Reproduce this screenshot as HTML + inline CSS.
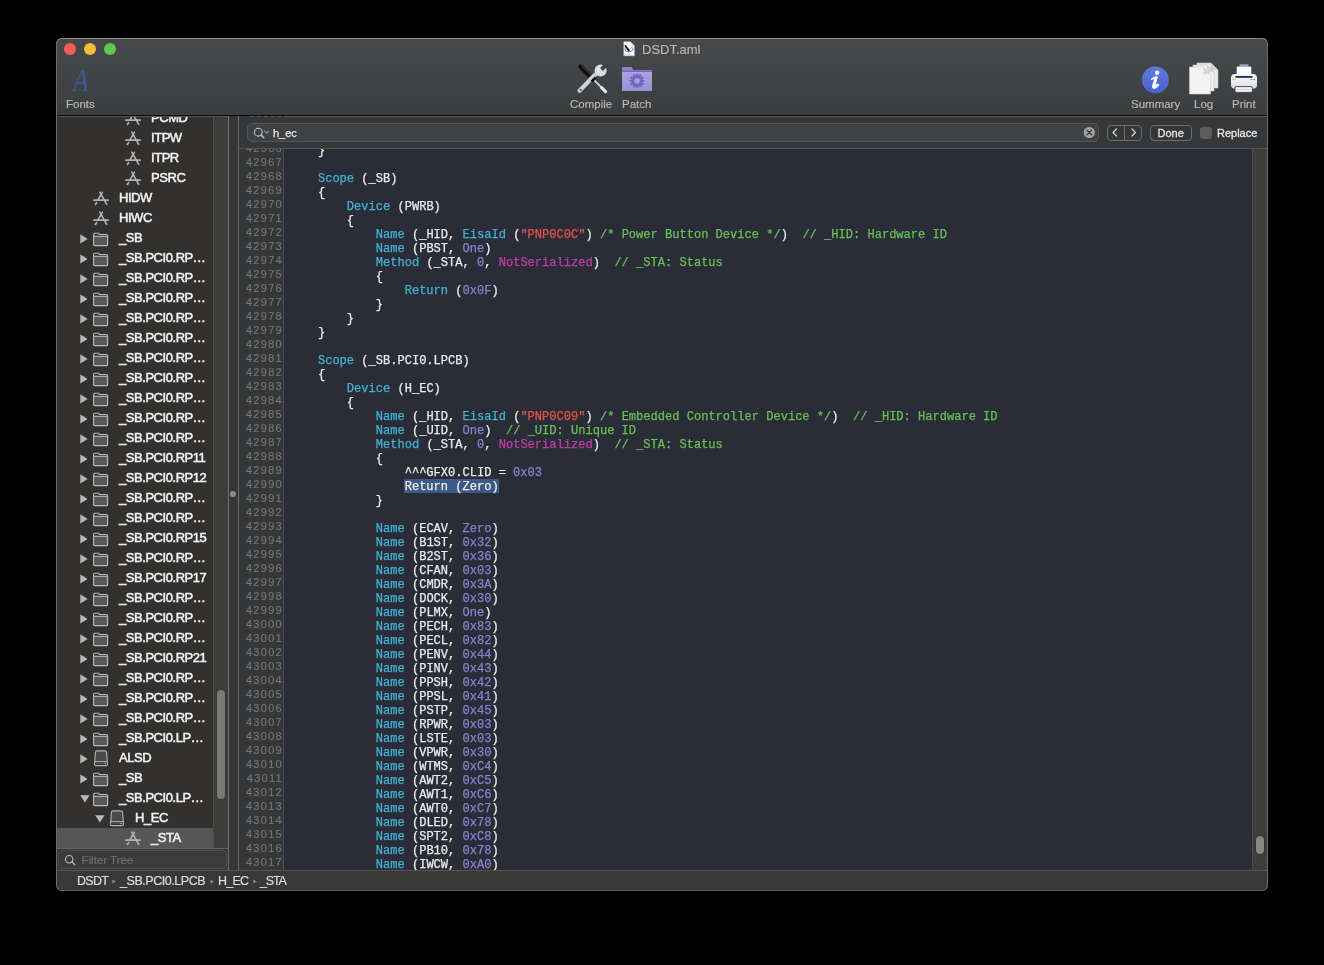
<!DOCTYPE html><html><head><meta charset="utf-8"><style>
*{margin:0;padding:0;box-sizing:border-box}
html,body{width:1324px;height:965px;background:#000;overflow:hidden;font-family:"Liberation Sans",sans-serif;position:relative}
div,span,svg{position:absolute}
i{font-style:normal}
#win{left:56px;top:38px;width:1212px;height:853px;border-radius:6px;background:#373737;overflow:hidden}
#winb{left:56px;top:38px;width:1212px;height:853px;border-radius:6px;border:1px solid #6c6c6c;border-top-color:#8c8c8c;border-bottom-color:#5e5e5e;z-index:50;pointer-events:none}
.tbtxt{font-size:11.5px;color:#b9b9b9;line-height:13px;white-space:nowrap;-webkit-text-stroke:0.15px}
.row{height:20px;font-size:13px;color:#f2f2f2;line-height:20px;white-space:nowrap;letter-spacing:-0.45px;-webkit-text-stroke:0.5px}
.ln{width:41px;text-align:right;font-size:11px;letter-spacing:1.3px;color:#757575;-webkit-text-stroke:0.15px;height:14px;line-height:14px}
.cl{left:289px;height:14px;line-height:14px;font-family:"Liberation Mono",monospace;font-size:12.055px;color:#ececec;white-space:pre;-webkit-text-stroke:0.25px}
.kw{color:#42b2d2}.st{color:#e1554b}.cm{color:#68c055}.nm{color:#8b80cf}.ns{color:#c03fa1}
.hi{background:#3a5683}
.vl{width:1px}
.hl{height:1px}
</style></head><body><div id="root" style="left:0;top:0;width:1324px;height:965px;will-change:transform">
<div id="win"></div>

<div style="left:56px;top:38px;width:1212px;height:77px;background:linear-gradient(#48494a,#3c3d3e);border-radius:6px 6px 0 0"></div>
<div class="hl" style="left:56px;top:115px;width:1212px;background:#0a0a0a"></div>
<div style="left:64px;top:43px;width:12px;height:12px;border-radius:50%;background:#ee5f57"></div>
<div style="left:84px;top:43px;width:12px;height:12px;border-radius:50%;background:#f5bd3f"></div>
<div style="left:104px;top:43px;width:12px;height:12px;border-radius:50%;background:#5ec84f"></div>
<div class="tbtxt" style="left:642px;top:42px;font-size:13px;line-height:15px;color:#b6b6b6">DSDT.aml</div>
<div class="tbtxt" style="left:66px;top:98px">Fonts</div>
<div class="tbtxt" style="left:570px;top:98px">Compile</div>
<div class="tbtxt" style="left:622px;top:98px">Patch</div>
<div class="tbtxt" style="left:1131px;top:98px">Summary</div>
<div class="tbtxt" style="left:1194px;top:98px">Log</div>
<div class="tbtxt" style="left:1232px;top:98px">Print</div>
<div style="left:72.5px;top:64px;font-family:'Liberation Serif',serif;font-style:italic;font-size:31px;line-height:34px;transform:scaleX(0.82);transform-origin:0 0;color:#3b5890;-webkit-text-stroke:0.5px #3b5890">A</div>
<svg style="left:623px;top:41px" width="12" height="16" viewBox="0 0 12 16">
<path d="M0.8 0.8 H7.3 L11.3 4.8 V14.8 H0.8 Z" fill="#fafafa" stroke="#d4d4d4" stroke-width="0.5"/>
<path d="M7.3 0.8 V4.8 H11.3 Z" fill="#dedede"/>
<path d="M1.8 7.4 Q2.3 10.8 6 10.8 Q9.7 10.8 10.2 6.8" stroke="#5f95d2" stroke-width="1.1" fill="none"/>
<path d="M5.9 9.8 L9.6 5.2" stroke="#8a8a8a" stroke-width="0.6"/>
<path d="M2.4 5 L5.9 9.6" stroke="#1b1b1b" stroke-width="1.9" stroke-linecap="round"/>
<path d="M4.4 13.6 H7.6" stroke="#c4c4c4" stroke-width="1"/>
</svg>
<svg style="left:576px;top:62px" width="33" height="33" viewBox="0 0 33 33">
<path d="M4.6 4.6 L16.8 16.8" stroke="#0b0b0b" stroke-width="4.6" stroke-linecap="round"/>
<path d="M5.2 3.6 L15.8 14.2" stroke="#6a6a6a" stroke-width="0.7"/>
<path d="M18 18 L27 27" stroke="#c4c8cb" stroke-width="1.9"/>
<path d="M25.6 25.6 L29.6 29.6" stroke="#e2e5e7" stroke-width="3.2" stroke-linecap="round"/>
<path d="M19 12.8 L3.6 28.6" stroke="#5c6064" stroke-width="5.2" stroke-linecap="round"/>
<path d="M19 12.8 L3.6 28.6" stroke="#cfd3d7" stroke-width="4" stroke-linecap="round"/>
<circle cx="4.6" cy="27.8" r="1" fill="#3a3a3a"/>
<circle cx="24.6" cy="8.4" r="6" fill="#d9dee2"/>
<path d="M24.1 6.1 L26.9 8.9 L32 3.8 L29.2 1 Z" fill="#434343"/>
<path d="M14.6 18.8 L18.8 14.6 L20.6 16.4 L16.4 20.6 Z" fill="#0b0b0b"/>
</svg>
<svg style="left:621px;top:66px" width="33" height="27" viewBox="0 0 33 27">
<defs><linearGradient id="pf" x1="0" y1="0" x2="0" y2="1"><stop offset="0" stop-color="#aaa1e0"/><stop offset="1" stop-color="#9b92d6"/></linearGradient></defs>
<path d="M1 2 Q1 1 2 1 H10.4 L12.6 4 H30 Q31 4 31 5 V7 H1 Z" fill="#8d81cc"/>
<rect x="1" y="4.6" width="30" height="1.6" fill="#7668bf"/>
<path d="M1 6.1 H31 V24 Q31 25 30 25 H2 Q1 25 1 24 Z" fill="url(#pf)"/>
<g transform="translate(16 14.8)" fill="#7264bb">
<circle r="5.3"/><rect x="-1.15" y="-7.3" width="2.3" height="3" rx="0.5" transform="rotate(0)"/><rect x="-1.15" y="-7.3" width="2.3" height="3" rx="0.5" transform="rotate(30)"/><rect x="-1.15" y="-7.3" width="2.3" height="3" rx="0.5" transform="rotate(60)"/><rect x="-1.15" y="-7.3" width="2.3" height="3" rx="0.5" transform="rotate(90)"/><rect x="-1.15" y="-7.3" width="2.3" height="3" rx="0.5" transform="rotate(120)"/><rect x="-1.15" y="-7.3" width="2.3" height="3" rx="0.5" transform="rotate(150)"/><rect x="-1.15" y="-7.3" width="2.3" height="3" rx="0.5" transform="rotate(180)"/><rect x="-1.15" y="-7.3" width="2.3" height="3" rx="0.5" transform="rotate(210)"/><rect x="-1.15" y="-7.3" width="2.3" height="3" rx="0.5" transform="rotate(240)"/><rect x="-1.15" y="-7.3" width="2.3" height="3" rx="0.5" transform="rotate(270)"/><rect x="-1.15" y="-7.3" width="2.3" height="3" rx="0.5" transform="rotate(300)"/><rect x="-1.15" y="-7.3" width="2.3" height="3" rx="0.5" transform="rotate(330)"/>
<circle r="2.9" fill="#a59cdc"/>
</g>
</svg>
<svg style="left:1141px;top:66px" width="29" height="29" viewBox="0 0 29 29">
<defs><linearGradient id="ig" x1="0" y1="0" x2="0" y2="1"><stop offset="0" stop-color="#5d7be0"/><stop offset="1" stop-color="#4862c8"/></linearGradient></defs>
<circle cx="14.4" cy="14" r="13.5" fill="url(#ig)"/>
<circle cx="16.1" cy="6.8" r="2.2" fill="#fff"/><path d="M10.8 13.2 Q13 11.2 15.6 11.1" stroke="#fff" stroke-width="1.8" fill="none" stroke-linecap="round"/><path d="M15.2 11.6 L12.6 20 Q12.2 21.9 14 21.1 L16.6 19.1" stroke="#fff" stroke-width="3" stroke-linecap="round" stroke-linejoin="round" fill="none"/>
</svg>
<svg style="left:1188px;top:62px" width="33" height="34" viewBox="0 0 33 34">
<path d="M9 1 H23 L30 8 V26 H9 Z" fill="#e9e9e9" stroke="#c8c8c8" stroke-width="0.6"/>
<path d="M23 1 V8 H30" fill="#cfcfcf"/>
<path d="M5 3 H19 L26 10 V29 H5 Z" fill="#efefef" stroke="#c8c8c8" stroke-width="0.6"/>
<path d="M19 3 V10 H26" fill="#d2d2d2"/>
<path d="M1.5 5 H15.5 L22.5 12 V32 H1.5 Z" fill="#f3f3f3" stroke="#cdcdcd" stroke-width="0.6"/>
<path d="M15.5 5 V12 H22.5 Z" fill="#d6d6d6"/>
</svg>
<svg style="left:1230px;top:63px" width="28" height="31" viewBox="0 0 28 31">
<defs><linearGradient id="pb" x1="0" y1="0" x2="0" y2="1"><stop offset="0" stop-color="#f4f4f4"/><stop offset="0.6" stop-color="#ececec"/><stop offset="1" stop-color="#d4d4d4"/></linearGradient></defs>
<rect x="9.5" y="1.2" width="9" height="2.6" rx="0.6" fill="#8ea4c4"/>
<rect x="6.7" y="3.6" width="14.6" height="9.5" fill="#fbfbfb"/>
<rect x="1" y="11" width="26" height="14.8" rx="4" fill="url(#pb)"/>
<path d="M5.5 13.9 H22.5" stroke="#1d2b42" stroke-width="1.8"/>
<circle cx="3.3" cy="16.5" r="0.6" fill="#e0662a"/><circle cx="5.3" cy="16.5" r="0.6" fill="#e8a030"/>
<path d="M20.5 16.5 H25" stroke="#6a6a6a" stroke-width="0.8" stroke-dasharray="1.8 0.8"/>
<rect x="5" y="23.6" width="17.4" height="5.8" rx="1.4" fill="#f6f6f6" stroke="#2f3f5c" stroke-width="0.9"/>
<path d="M7 26.5 H20.5" stroke="#c4c4c4" stroke-width="0.8"/>
</svg>
<div style="left:57px;top:116px;width:156px;height:754px;background:#32312f;overflow:hidden">
<div class="row" style="left:0;top:-8px;width:156px;">
<span style="left:67px;top:2px"><svg width="18" height="16" viewBox="0 0 18 16"><g stroke="#b2b2b2" stroke-width="1.65" stroke-linecap="round" fill="none"><path d="M7.8 2.1 L14.7 14.4"/><path d="M10.4 2.3 L6.1 9.6"/><path d="M4.6 12.6 L3.4 14.5"/><path d="M1.8 10.15 H16.2"/></g></svg></span>
<span style="left:94px;top:0">PCMD</span>
</div>
<div class="row" style="left:0;top:12px;width:156px;">
<span style="left:67px;top:2px"><svg width="18" height="16" viewBox="0 0 18 16"><g stroke="#b2b2b2" stroke-width="1.65" stroke-linecap="round" fill="none"><path d="M7.8 2.1 L14.7 14.4"/><path d="M10.4 2.3 L6.1 9.6"/><path d="M4.6 12.6 L3.4 14.5"/><path d="M1.8 10.15 H16.2"/></g></svg></span>
<span style="left:94px;top:0">ITPW</span>
</div>
<div class="row" style="left:0;top:32px;width:156px;">
<span style="left:67px;top:2px"><svg width="18" height="16" viewBox="0 0 18 16"><g stroke="#b2b2b2" stroke-width="1.65" stroke-linecap="round" fill="none"><path d="M7.8 2.1 L14.7 14.4"/><path d="M10.4 2.3 L6.1 9.6"/><path d="M4.6 12.6 L3.4 14.5"/><path d="M1.8 10.15 H16.2"/></g></svg></span>
<span style="left:94px;top:0">ITPR</span>
</div>
<div class="row" style="left:0;top:52px;width:156px;">
<span style="left:67px;top:2px"><svg width="18" height="16" viewBox="0 0 18 16"><g stroke="#b2b2b2" stroke-width="1.65" stroke-linecap="round" fill="none"><path d="M7.8 2.1 L14.7 14.4"/><path d="M10.4 2.3 L6.1 9.6"/><path d="M4.6 12.6 L3.4 14.5"/><path d="M1.8 10.15 H16.2"/></g></svg></span>
<span style="left:94px;top:0">PSRC</span>
</div>
<div class="row" style="left:0;top:72px;width:156px;">
<span style="left:35px;top:2px"><svg width="18" height="16" viewBox="0 0 18 16"><g stroke="#b2b2b2" stroke-width="1.65" stroke-linecap="round" fill="none"><path d="M7.8 2.1 L14.7 14.4"/><path d="M10.4 2.3 L6.1 9.6"/><path d="M4.6 12.6 L3.4 14.5"/><path d="M1.8 10.15 H16.2"/></g></svg></span>
<span style="left:62px;top:0">HIDW</span>
</div>
<div class="row" style="left:0;top:92px;width:156px;">
<span style="left:35px;top:2px"><svg width="18" height="16" viewBox="0 0 18 16"><g stroke="#b2b2b2" stroke-width="1.65" stroke-linecap="round" fill="none"><path d="M7.8 2.1 L14.7 14.4"/><path d="M10.4 2.3 L6.1 9.6"/><path d="M4.6 12.6 L3.4 14.5"/><path d="M1.8 10.15 H16.2"/></g></svg></span>
<span style="left:62px;top:0">HIWC</span>
</div>
<div class="row" style="left:0;top:112px;width:156px;">
<span style="left:22.6px;top:6px"><svg width="9" height="10" viewBox="0 0 9 10"><path d="M0.3 0.3 L7.6 4.9 L0.3 9.6 Z" fill="#b8b8b8"/></svg></span>
<span style="left:35.0px;top:4px"><svg width="18" height="15" viewBox="0 0 18 15"><rect x="1.6" y="4.6" width="14" height="8.6" fill="#585858"/><path d="M1.6 12.6 V2.3 Q1.6 1.2 2.7 1.2 H6 Q6.7 1.2 7.1 1.8 L7.5 2.5 H14.5 Q15.6 2.5 15.6 3.6 V12.6 Q15.6 13.6 14.6 13.6 H2.6 Q1.6 13.6 1.6 12.6 Z" fill="none" stroke="#bababa" stroke-width="1.15"/><path d="M1.6 4.3 H15.6" stroke="#bababa" stroke-width="1.15"/></svg></span>
<span style="left:62px;top:0">_SB</span>
</div>
<div class="row" style="left:0;top:132px;width:156px;">
<span style="left:22.6px;top:6px"><svg width="9" height="10" viewBox="0 0 9 10"><path d="M0.3 0.3 L7.6 4.9 L0.3 9.6 Z" fill="#b8b8b8"/></svg></span>
<span style="left:35.0px;top:4px"><svg width="18" height="15" viewBox="0 0 18 15"><rect x="1.6" y="4.6" width="14" height="8.6" fill="#585858"/><path d="M1.6 12.6 V2.3 Q1.6 1.2 2.7 1.2 H6 Q6.7 1.2 7.1 1.8 L7.5 2.5 H14.5 Q15.6 2.5 15.6 3.6 V12.6 Q15.6 13.6 14.6 13.6 H2.6 Q1.6 13.6 1.6 12.6 Z" fill="none" stroke="#bababa" stroke-width="1.15"/><path d="M1.6 4.3 H15.6" stroke="#bababa" stroke-width="1.15"/></svg></span>
<span style="left:62px;top:0">_SB.PCI0.RP…</span>
</div>
<div class="row" style="left:0;top:152px;width:156px;">
<span style="left:22.6px;top:6px"><svg width="9" height="10" viewBox="0 0 9 10"><path d="M0.3 0.3 L7.6 4.9 L0.3 9.6 Z" fill="#b8b8b8"/></svg></span>
<span style="left:35.0px;top:4px"><svg width="18" height="15" viewBox="0 0 18 15"><rect x="1.6" y="4.6" width="14" height="8.6" fill="#585858"/><path d="M1.6 12.6 V2.3 Q1.6 1.2 2.7 1.2 H6 Q6.7 1.2 7.1 1.8 L7.5 2.5 H14.5 Q15.6 2.5 15.6 3.6 V12.6 Q15.6 13.6 14.6 13.6 H2.6 Q1.6 13.6 1.6 12.6 Z" fill="none" stroke="#bababa" stroke-width="1.15"/><path d="M1.6 4.3 H15.6" stroke="#bababa" stroke-width="1.15"/></svg></span>
<span style="left:62px;top:0">_SB.PCI0.RP…</span>
</div>
<div class="row" style="left:0;top:172px;width:156px;">
<span style="left:22.6px;top:6px"><svg width="9" height="10" viewBox="0 0 9 10"><path d="M0.3 0.3 L7.6 4.9 L0.3 9.6 Z" fill="#b8b8b8"/></svg></span>
<span style="left:35.0px;top:4px"><svg width="18" height="15" viewBox="0 0 18 15"><rect x="1.6" y="4.6" width="14" height="8.6" fill="#585858"/><path d="M1.6 12.6 V2.3 Q1.6 1.2 2.7 1.2 H6 Q6.7 1.2 7.1 1.8 L7.5 2.5 H14.5 Q15.6 2.5 15.6 3.6 V12.6 Q15.6 13.6 14.6 13.6 H2.6 Q1.6 13.6 1.6 12.6 Z" fill="none" stroke="#bababa" stroke-width="1.15"/><path d="M1.6 4.3 H15.6" stroke="#bababa" stroke-width="1.15"/></svg></span>
<span style="left:62px;top:0">_SB.PCI0.RP…</span>
</div>
<div class="row" style="left:0;top:192px;width:156px;">
<span style="left:22.6px;top:6px"><svg width="9" height="10" viewBox="0 0 9 10"><path d="M0.3 0.3 L7.6 4.9 L0.3 9.6 Z" fill="#b8b8b8"/></svg></span>
<span style="left:35.0px;top:4px"><svg width="18" height="15" viewBox="0 0 18 15"><rect x="1.6" y="4.6" width="14" height="8.6" fill="#585858"/><path d="M1.6 12.6 V2.3 Q1.6 1.2 2.7 1.2 H6 Q6.7 1.2 7.1 1.8 L7.5 2.5 H14.5 Q15.6 2.5 15.6 3.6 V12.6 Q15.6 13.6 14.6 13.6 H2.6 Q1.6 13.6 1.6 12.6 Z" fill="none" stroke="#bababa" stroke-width="1.15"/><path d="M1.6 4.3 H15.6" stroke="#bababa" stroke-width="1.15"/></svg></span>
<span style="left:62px;top:0">_SB.PCI0.RP…</span>
</div>
<div class="row" style="left:0;top:212px;width:156px;">
<span style="left:22.6px;top:6px"><svg width="9" height="10" viewBox="0 0 9 10"><path d="M0.3 0.3 L7.6 4.9 L0.3 9.6 Z" fill="#b8b8b8"/></svg></span>
<span style="left:35.0px;top:4px"><svg width="18" height="15" viewBox="0 0 18 15"><rect x="1.6" y="4.6" width="14" height="8.6" fill="#585858"/><path d="M1.6 12.6 V2.3 Q1.6 1.2 2.7 1.2 H6 Q6.7 1.2 7.1 1.8 L7.5 2.5 H14.5 Q15.6 2.5 15.6 3.6 V12.6 Q15.6 13.6 14.6 13.6 H2.6 Q1.6 13.6 1.6 12.6 Z" fill="none" stroke="#bababa" stroke-width="1.15"/><path d="M1.6 4.3 H15.6" stroke="#bababa" stroke-width="1.15"/></svg></span>
<span style="left:62px;top:0">_SB.PCI0.RP…</span>
</div>
<div class="row" style="left:0;top:232px;width:156px;">
<span style="left:22.6px;top:6px"><svg width="9" height="10" viewBox="0 0 9 10"><path d="M0.3 0.3 L7.6 4.9 L0.3 9.6 Z" fill="#b8b8b8"/></svg></span>
<span style="left:35.0px;top:4px"><svg width="18" height="15" viewBox="0 0 18 15"><rect x="1.6" y="4.6" width="14" height="8.6" fill="#585858"/><path d="M1.6 12.6 V2.3 Q1.6 1.2 2.7 1.2 H6 Q6.7 1.2 7.1 1.8 L7.5 2.5 H14.5 Q15.6 2.5 15.6 3.6 V12.6 Q15.6 13.6 14.6 13.6 H2.6 Q1.6 13.6 1.6 12.6 Z" fill="none" stroke="#bababa" stroke-width="1.15"/><path d="M1.6 4.3 H15.6" stroke="#bababa" stroke-width="1.15"/></svg></span>
<span style="left:62px;top:0">_SB.PCI0.RP…</span>
</div>
<div class="row" style="left:0;top:252px;width:156px;">
<span style="left:22.6px;top:6px"><svg width="9" height="10" viewBox="0 0 9 10"><path d="M0.3 0.3 L7.6 4.9 L0.3 9.6 Z" fill="#b8b8b8"/></svg></span>
<span style="left:35.0px;top:4px"><svg width="18" height="15" viewBox="0 0 18 15"><rect x="1.6" y="4.6" width="14" height="8.6" fill="#585858"/><path d="M1.6 12.6 V2.3 Q1.6 1.2 2.7 1.2 H6 Q6.7 1.2 7.1 1.8 L7.5 2.5 H14.5 Q15.6 2.5 15.6 3.6 V12.6 Q15.6 13.6 14.6 13.6 H2.6 Q1.6 13.6 1.6 12.6 Z" fill="none" stroke="#bababa" stroke-width="1.15"/><path d="M1.6 4.3 H15.6" stroke="#bababa" stroke-width="1.15"/></svg></span>
<span style="left:62px;top:0">_SB.PCI0.RP…</span>
</div>
<div class="row" style="left:0;top:272px;width:156px;">
<span style="left:22.6px;top:6px"><svg width="9" height="10" viewBox="0 0 9 10"><path d="M0.3 0.3 L7.6 4.9 L0.3 9.6 Z" fill="#b8b8b8"/></svg></span>
<span style="left:35.0px;top:4px"><svg width="18" height="15" viewBox="0 0 18 15"><rect x="1.6" y="4.6" width="14" height="8.6" fill="#585858"/><path d="M1.6 12.6 V2.3 Q1.6 1.2 2.7 1.2 H6 Q6.7 1.2 7.1 1.8 L7.5 2.5 H14.5 Q15.6 2.5 15.6 3.6 V12.6 Q15.6 13.6 14.6 13.6 H2.6 Q1.6 13.6 1.6 12.6 Z" fill="none" stroke="#bababa" stroke-width="1.15"/><path d="M1.6 4.3 H15.6" stroke="#bababa" stroke-width="1.15"/></svg></span>
<span style="left:62px;top:0">_SB.PCI0.RP…</span>
</div>
<div class="row" style="left:0;top:292px;width:156px;">
<span style="left:22.6px;top:6px"><svg width="9" height="10" viewBox="0 0 9 10"><path d="M0.3 0.3 L7.6 4.9 L0.3 9.6 Z" fill="#b8b8b8"/></svg></span>
<span style="left:35.0px;top:4px"><svg width="18" height="15" viewBox="0 0 18 15"><rect x="1.6" y="4.6" width="14" height="8.6" fill="#585858"/><path d="M1.6 12.6 V2.3 Q1.6 1.2 2.7 1.2 H6 Q6.7 1.2 7.1 1.8 L7.5 2.5 H14.5 Q15.6 2.5 15.6 3.6 V12.6 Q15.6 13.6 14.6 13.6 H2.6 Q1.6 13.6 1.6 12.6 Z" fill="none" stroke="#bababa" stroke-width="1.15"/><path d="M1.6 4.3 H15.6" stroke="#bababa" stroke-width="1.15"/></svg></span>
<span style="left:62px;top:0">_SB.PCI0.RP…</span>
</div>
<div class="row" style="left:0;top:312px;width:156px;">
<span style="left:22.6px;top:6px"><svg width="9" height="10" viewBox="0 0 9 10"><path d="M0.3 0.3 L7.6 4.9 L0.3 9.6 Z" fill="#b8b8b8"/></svg></span>
<span style="left:35.0px;top:4px"><svg width="18" height="15" viewBox="0 0 18 15"><rect x="1.6" y="4.6" width="14" height="8.6" fill="#585858"/><path d="M1.6 12.6 V2.3 Q1.6 1.2 2.7 1.2 H6 Q6.7 1.2 7.1 1.8 L7.5 2.5 H14.5 Q15.6 2.5 15.6 3.6 V12.6 Q15.6 13.6 14.6 13.6 H2.6 Q1.6 13.6 1.6 12.6 Z" fill="none" stroke="#bababa" stroke-width="1.15"/><path d="M1.6 4.3 H15.6" stroke="#bababa" stroke-width="1.15"/></svg></span>
<span style="left:62px;top:0">_SB.PCI0.RP…</span>
</div>
<div class="row" style="left:0;top:332px;width:156px;">
<span style="left:22.6px;top:6px"><svg width="9" height="10" viewBox="0 0 9 10"><path d="M0.3 0.3 L7.6 4.9 L0.3 9.6 Z" fill="#b8b8b8"/></svg></span>
<span style="left:35.0px;top:4px"><svg width="18" height="15" viewBox="0 0 18 15"><rect x="1.6" y="4.6" width="14" height="8.6" fill="#585858"/><path d="M1.6 12.6 V2.3 Q1.6 1.2 2.7 1.2 H6 Q6.7 1.2 7.1 1.8 L7.5 2.5 H14.5 Q15.6 2.5 15.6 3.6 V12.6 Q15.6 13.6 14.6 13.6 H2.6 Q1.6 13.6 1.6 12.6 Z" fill="none" stroke="#bababa" stroke-width="1.15"/><path d="M1.6 4.3 H15.6" stroke="#bababa" stroke-width="1.15"/></svg></span>
<span style="left:62px;top:0">_SB.PCI0.RP11</span>
</div>
<div class="row" style="left:0;top:352px;width:156px;">
<span style="left:22.6px;top:6px"><svg width="9" height="10" viewBox="0 0 9 10"><path d="M0.3 0.3 L7.6 4.9 L0.3 9.6 Z" fill="#b8b8b8"/></svg></span>
<span style="left:35.0px;top:4px"><svg width="18" height="15" viewBox="0 0 18 15"><rect x="1.6" y="4.6" width="14" height="8.6" fill="#585858"/><path d="M1.6 12.6 V2.3 Q1.6 1.2 2.7 1.2 H6 Q6.7 1.2 7.1 1.8 L7.5 2.5 H14.5 Q15.6 2.5 15.6 3.6 V12.6 Q15.6 13.6 14.6 13.6 H2.6 Q1.6 13.6 1.6 12.6 Z" fill="none" stroke="#bababa" stroke-width="1.15"/><path d="M1.6 4.3 H15.6" stroke="#bababa" stroke-width="1.15"/></svg></span>
<span style="left:62px;top:0">_SB.PCI0.RP12</span>
</div>
<div class="row" style="left:0;top:372px;width:156px;">
<span style="left:22.6px;top:6px"><svg width="9" height="10" viewBox="0 0 9 10"><path d="M0.3 0.3 L7.6 4.9 L0.3 9.6 Z" fill="#b8b8b8"/></svg></span>
<span style="left:35.0px;top:4px"><svg width="18" height="15" viewBox="0 0 18 15"><rect x="1.6" y="4.6" width="14" height="8.6" fill="#585858"/><path d="M1.6 12.6 V2.3 Q1.6 1.2 2.7 1.2 H6 Q6.7 1.2 7.1 1.8 L7.5 2.5 H14.5 Q15.6 2.5 15.6 3.6 V12.6 Q15.6 13.6 14.6 13.6 H2.6 Q1.6 13.6 1.6 12.6 Z" fill="none" stroke="#bababa" stroke-width="1.15"/><path d="M1.6 4.3 H15.6" stroke="#bababa" stroke-width="1.15"/></svg></span>
<span style="left:62px;top:0">_SB.PCI0.RP…</span>
</div>
<div class="row" style="left:0;top:392px;width:156px;">
<span style="left:22.6px;top:6px"><svg width="9" height="10" viewBox="0 0 9 10"><path d="M0.3 0.3 L7.6 4.9 L0.3 9.6 Z" fill="#b8b8b8"/></svg></span>
<span style="left:35.0px;top:4px"><svg width="18" height="15" viewBox="0 0 18 15"><rect x="1.6" y="4.6" width="14" height="8.6" fill="#585858"/><path d="M1.6 12.6 V2.3 Q1.6 1.2 2.7 1.2 H6 Q6.7 1.2 7.1 1.8 L7.5 2.5 H14.5 Q15.6 2.5 15.6 3.6 V12.6 Q15.6 13.6 14.6 13.6 H2.6 Q1.6 13.6 1.6 12.6 Z" fill="none" stroke="#bababa" stroke-width="1.15"/><path d="M1.6 4.3 H15.6" stroke="#bababa" stroke-width="1.15"/></svg></span>
<span style="left:62px;top:0">_SB.PCI0.RP…</span>
</div>
<div class="row" style="left:0;top:412px;width:156px;">
<span style="left:22.6px;top:6px"><svg width="9" height="10" viewBox="0 0 9 10"><path d="M0.3 0.3 L7.6 4.9 L0.3 9.6 Z" fill="#b8b8b8"/></svg></span>
<span style="left:35.0px;top:4px"><svg width="18" height="15" viewBox="0 0 18 15"><rect x="1.6" y="4.6" width="14" height="8.6" fill="#585858"/><path d="M1.6 12.6 V2.3 Q1.6 1.2 2.7 1.2 H6 Q6.7 1.2 7.1 1.8 L7.5 2.5 H14.5 Q15.6 2.5 15.6 3.6 V12.6 Q15.6 13.6 14.6 13.6 H2.6 Q1.6 13.6 1.6 12.6 Z" fill="none" stroke="#bababa" stroke-width="1.15"/><path d="M1.6 4.3 H15.6" stroke="#bababa" stroke-width="1.15"/></svg></span>
<span style="left:62px;top:0">_SB.PCI0.RP15</span>
</div>
<div class="row" style="left:0;top:432px;width:156px;">
<span style="left:22.6px;top:6px"><svg width="9" height="10" viewBox="0 0 9 10"><path d="M0.3 0.3 L7.6 4.9 L0.3 9.6 Z" fill="#b8b8b8"/></svg></span>
<span style="left:35.0px;top:4px"><svg width="18" height="15" viewBox="0 0 18 15"><rect x="1.6" y="4.6" width="14" height="8.6" fill="#585858"/><path d="M1.6 12.6 V2.3 Q1.6 1.2 2.7 1.2 H6 Q6.7 1.2 7.1 1.8 L7.5 2.5 H14.5 Q15.6 2.5 15.6 3.6 V12.6 Q15.6 13.6 14.6 13.6 H2.6 Q1.6 13.6 1.6 12.6 Z" fill="none" stroke="#bababa" stroke-width="1.15"/><path d="M1.6 4.3 H15.6" stroke="#bababa" stroke-width="1.15"/></svg></span>
<span style="left:62px;top:0">_SB.PCI0.RP…</span>
</div>
<div class="row" style="left:0;top:452px;width:156px;">
<span style="left:22.6px;top:6px"><svg width="9" height="10" viewBox="0 0 9 10"><path d="M0.3 0.3 L7.6 4.9 L0.3 9.6 Z" fill="#b8b8b8"/></svg></span>
<span style="left:35.0px;top:4px"><svg width="18" height="15" viewBox="0 0 18 15"><rect x="1.6" y="4.6" width="14" height="8.6" fill="#585858"/><path d="M1.6 12.6 V2.3 Q1.6 1.2 2.7 1.2 H6 Q6.7 1.2 7.1 1.8 L7.5 2.5 H14.5 Q15.6 2.5 15.6 3.6 V12.6 Q15.6 13.6 14.6 13.6 H2.6 Q1.6 13.6 1.6 12.6 Z" fill="none" stroke="#bababa" stroke-width="1.15"/><path d="M1.6 4.3 H15.6" stroke="#bababa" stroke-width="1.15"/></svg></span>
<span style="left:62px;top:0">_SB.PCI0.RP17</span>
</div>
<div class="row" style="left:0;top:472px;width:156px;">
<span style="left:22.6px;top:6px"><svg width="9" height="10" viewBox="0 0 9 10"><path d="M0.3 0.3 L7.6 4.9 L0.3 9.6 Z" fill="#b8b8b8"/></svg></span>
<span style="left:35.0px;top:4px"><svg width="18" height="15" viewBox="0 0 18 15"><rect x="1.6" y="4.6" width="14" height="8.6" fill="#585858"/><path d="M1.6 12.6 V2.3 Q1.6 1.2 2.7 1.2 H6 Q6.7 1.2 7.1 1.8 L7.5 2.5 H14.5 Q15.6 2.5 15.6 3.6 V12.6 Q15.6 13.6 14.6 13.6 H2.6 Q1.6 13.6 1.6 12.6 Z" fill="none" stroke="#bababa" stroke-width="1.15"/><path d="M1.6 4.3 H15.6" stroke="#bababa" stroke-width="1.15"/></svg></span>
<span style="left:62px;top:0">_SB.PCI0.RP…</span>
</div>
<div class="row" style="left:0;top:492px;width:156px;">
<span style="left:22.6px;top:6px"><svg width="9" height="10" viewBox="0 0 9 10"><path d="M0.3 0.3 L7.6 4.9 L0.3 9.6 Z" fill="#b8b8b8"/></svg></span>
<span style="left:35.0px;top:4px"><svg width="18" height="15" viewBox="0 0 18 15"><rect x="1.6" y="4.6" width="14" height="8.6" fill="#585858"/><path d="M1.6 12.6 V2.3 Q1.6 1.2 2.7 1.2 H6 Q6.7 1.2 7.1 1.8 L7.5 2.5 H14.5 Q15.6 2.5 15.6 3.6 V12.6 Q15.6 13.6 14.6 13.6 H2.6 Q1.6 13.6 1.6 12.6 Z" fill="none" stroke="#bababa" stroke-width="1.15"/><path d="M1.6 4.3 H15.6" stroke="#bababa" stroke-width="1.15"/></svg></span>
<span style="left:62px;top:0">_SB.PCI0.RP…</span>
</div>
<div class="row" style="left:0;top:512px;width:156px;">
<span style="left:22.6px;top:6px"><svg width="9" height="10" viewBox="0 0 9 10"><path d="M0.3 0.3 L7.6 4.9 L0.3 9.6 Z" fill="#b8b8b8"/></svg></span>
<span style="left:35.0px;top:4px"><svg width="18" height="15" viewBox="0 0 18 15"><rect x="1.6" y="4.6" width="14" height="8.6" fill="#585858"/><path d="M1.6 12.6 V2.3 Q1.6 1.2 2.7 1.2 H6 Q6.7 1.2 7.1 1.8 L7.5 2.5 H14.5 Q15.6 2.5 15.6 3.6 V12.6 Q15.6 13.6 14.6 13.6 H2.6 Q1.6 13.6 1.6 12.6 Z" fill="none" stroke="#bababa" stroke-width="1.15"/><path d="M1.6 4.3 H15.6" stroke="#bababa" stroke-width="1.15"/></svg></span>
<span style="left:62px;top:0">_SB.PCI0.RP…</span>
</div>
<div class="row" style="left:0;top:532px;width:156px;">
<span style="left:22.6px;top:6px"><svg width="9" height="10" viewBox="0 0 9 10"><path d="M0.3 0.3 L7.6 4.9 L0.3 9.6 Z" fill="#b8b8b8"/></svg></span>
<span style="left:35.0px;top:4px"><svg width="18" height="15" viewBox="0 0 18 15"><rect x="1.6" y="4.6" width="14" height="8.6" fill="#585858"/><path d="M1.6 12.6 V2.3 Q1.6 1.2 2.7 1.2 H6 Q6.7 1.2 7.1 1.8 L7.5 2.5 H14.5 Q15.6 2.5 15.6 3.6 V12.6 Q15.6 13.6 14.6 13.6 H2.6 Q1.6 13.6 1.6 12.6 Z" fill="none" stroke="#bababa" stroke-width="1.15"/><path d="M1.6 4.3 H15.6" stroke="#bababa" stroke-width="1.15"/></svg></span>
<span style="left:62px;top:0">_SB.PCI0.RP21</span>
</div>
<div class="row" style="left:0;top:552px;width:156px;">
<span style="left:22.6px;top:6px"><svg width="9" height="10" viewBox="0 0 9 10"><path d="M0.3 0.3 L7.6 4.9 L0.3 9.6 Z" fill="#b8b8b8"/></svg></span>
<span style="left:35.0px;top:4px"><svg width="18" height="15" viewBox="0 0 18 15"><rect x="1.6" y="4.6" width="14" height="8.6" fill="#585858"/><path d="M1.6 12.6 V2.3 Q1.6 1.2 2.7 1.2 H6 Q6.7 1.2 7.1 1.8 L7.5 2.5 H14.5 Q15.6 2.5 15.6 3.6 V12.6 Q15.6 13.6 14.6 13.6 H2.6 Q1.6 13.6 1.6 12.6 Z" fill="none" stroke="#bababa" stroke-width="1.15"/><path d="M1.6 4.3 H15.6" stroke="#bababa" stroke-width="1.15"/></svg></span>
<span style="left:62px;top:0">_SB.PCI0.RP…</span>
</div>
<div class="row" style="left:0;top:572px;width:156px;">
<span style="left:22.6px;top:6px"><svg width="9" height="10" viewBox="0 0 9 10"><path d="M0.3 0.3 L7.6 4.9 L0.3 9.6 Z" fill="#b8b8b8"/></svg></span>
<span style="left:35.0px;top:4px"><svg width="18" height="15" viewBox="0 0 18 15"><rect x="1.6" y="4.6" width="14" height="8.6" fill="#585858"/><path d="M1.6 12.6 V2.3 Q1.6 1.2 2.7 1.2 H6 Q6.7 1.2 7.1 1.8 L7.5 2.5 H14.5 Q15.6 2.5 15.6 3.6 V12.6 Q15.6 13.6 14.6 13.6 H2.6 Q1.6 13.6 1.6 12.6 Z" fill="none" stroke="#bababa" stroke-width="1.15"/><path d="M1.6 4.3 H15.6" stroke="#bababa" stroke-width="1.15"/></svg></span>
<span style="left:62px;top:0">_SB.PCI0.RP…</span>
</div>
<div class="row" style="left:0;top:592px;width:156px;">
<span style="left:22.6px;top:6px"><svg width="9" height="10" viewBox="0 0 9 10"><path d="M0.3 0.3 L7.6 4.9 L0.3 9.6 Z" fill="#b8b8b8"/></svg></span>
<span style="left:35.0px;top:4px"><svg width="18" height="15" viewBox="0 0 18 15"><rect x="1.6" y="4.6" width="14" height="8.6" fill="#585858"/><path d="M1.6 12.6 V2.3 Q1.6 1.2 2.7 1.2 H6 Q6.7 1.2 7.1 1.8 L7.5 2.5 H14.5 Q15.6 2.5 15.6 3.6 V12.6 Q15.6 13.6 14.6 13.6 H2.6 Q1.6 13.6 1.6 12.6 Z" fill="none" stroke="#bababa" stroke-width="1.15"/><path d="M1.6 4.3 H15.6" stroke="#bababa" stroke-width="1.15"/></svg></span>
<span style="left:62px;top:0">_SB.PCI0.RP…</span>
</div>
<div class="row" style="left:0;top:612px;width:156px;">
<span style="left:22.6px;top:6px"><svg width="9" height="10" viewBox="0 0 9 10"><path d="M0.3 0.3 L7.6 4.9 L0.3 9.6 Z" fill="#b8b8b8"/></svg></span>
<span style="left:35.0px;top:4px"><svg width="18" height="15" viewBox="0 0 18 15"><rect x="1.6" y="4.6" width="14" height="8.6" fill="#585858"/><path d="M1.6 12.6 V2.3 Q1.6 1.2 2.7 1.2 H6 Q6.7 1.2 7.1 1.8 L7.5 2.5 H14.5 Q15.6 2.5 15.6 3.6 V12.6 Q15.6 13.6 14.6 13.6 H2.6 Q1.6 13.6 1.6 12.6 Z" fill="none" stroke="#bababa" stroke-width="1.15"/><path d="M1.6 4.3 H15.6" stroke="#bababa" stroke-width="1.15"/></svg></span>
<span style="left:62px;top:0">_SB.PCI0.LP…</span>
</div>
<div class="row" style="left:0;top:632px;width:156px;">
<span style="left:22.6px;top:6px"><svg width="9" height="10" viewBox="0 0 9 10"><path d="M0.3 0.3 L7.6 4.9 L0.3 9.6 Z" fill="#b8b8b8"/></svg></span>
<span style="left:35.6px;top:2px"><svg width="16" height="17" viewBox="0 0 16 17"><path d="M2 11 L2.7 2.6 Q2.8 1.3 4.3 1.3 H11.7 Q13.2 1.3 13.3 2.6 L14 11 Z" fill="#4a4a4a"/><path d="M1.5 14.2 L2.4 2.6 Q2.5 0.9 4.2 0.9 H11.8 Q13.5 0.9 13.6 2.6 L14.5 14.2 Q14.5 15.6 13.1 15.6 H2.9 Q1.5 15.6 1.5 14.2 Z" fill="none" stroke="#b3b3b3" stroke-width="1.1"/><path d="M1.9 11.6 H14.1" stroke="#b3b3b3" stroke-width="1.1"/><path d="M3.6 13.6 H11.4" stroke="#5c5c5c" stroke-width="0.9"/><circle cx="12.2" cy="13.5" r="0.75" fill="#d0d0d0"/></svg></span>
<span style="left:62px;top:0">ALSD</span>
</div>
<div class="row" style="left:0;top:652px;width:156px;">
<span style="left:22.6px;top:6px"><svg width="9" height="10" viewBox="0 0 9 10"><path d="M0.3 0.3 L7.6 4.9 L0.3 9.6 Z" fill="#b8b8b8"/></svg></span>
<span style="left:35.0px;top:4px"><svg width="18" height="15" viewBox="0 0 18 15"><rect x="1.6" y="4.6" width="14" height="8.6" fill="#585858"/><path d="M1.6 12.6 V2.3 Q1.6 1.2 2.7 1.2 H6 Q6.7 1.2 7.1 1.8 L7.5 2.5 H14.5 Q15.6 2.5 15.6 3.6 V12.6 Q15.6 13.6 14.6 13.6 H2.6 Q1.6 13.6 1.6 12.6 Z" fill="none" stroke="#bababa" stroke-width="1.15"/><path d="M1.6 4.3 H15.6" stroke="#bababa" stroke-width="1.15"/></svg></span>
<span style="left:62px;top:0">_SB</span>
</div>
<div class="row" style="left:0;top:672px;width:156px;">
<span style="left:22.6px;top:7px"><svg width="10" height="9" viewBox="0 0 10 9"><path d="M0.2 0.3 L9.6 0.3 L4.9 7.6 Z" fill="#b8b8b8"/></svg></span>
<span style="left:35.0px;top:4px"><svg width="18" height="15" viewBox="0 0 18 15"><rect x="1.6" y="4.6" width="14" height="8.6" fill="#585858"/><path d="M1.6 12.6 V2.3 Q1.6 1.2 2.7 1.2 H6 Q6.7 1.2 7.1 1.8 L7.5 2.5 H14.5 Q15.6 2.5 15.6 3.6 V12.6 Q15.6 13.6 14.6 13.6 H2.6 Q1.6 13.6 1.6 12.6 Z" fill="none" stroke="#bababa" stroke-width="1.15"/><path d="M1.6 4.3 H15.6" stroke="#bababa" stroke-width="1.15"/></svg></span>
<span style="left:62px;top:0">_SB.PCI0.LP…</span>
</div>
<div class="row" style="left:0;top:692px;width:156px;">
<span style="left:37.7px;top:7px"><svg width="10" height="9" viewBox="0 0 10 9"><path d="M0.2 0.3 L9.6 0.3 L4.9 7.6 Z" fill="#b8b8b8"/></svg></span>
<span style="left:52.2px;top:2px"><svg width="16" height="17" viewBox="0 0 16 17"><path d="M2 11 L2.7 2.6 Q2.8 1.3 4.3 1.3 H11.7 Q13.2 1.3 13.3 2.6 L14 11 Z" fill="#4a4a4a"/><path d="M1.5 14.2 L2.4 2.6 Q2.5 0.9 4.2 0.9 H11.8 Q13.5 0.9 13.6 2.6 L14.5 14.2 Q14.5 15.6 13.1 15.6 H2.9 Q1.5 15.6 1.5 14.2 Z" fill="none" stroke="#b3b3b3" stroke-width="1.1"/><path d="M1.9 11.6 H14.1" stroke="#b3b3b3" stroke-width="1.1"/><path d="M3.6 13.6 H11.4" stroke="#5c5c5c" stroke-width="0.9"/><circle cx="12.2" cy="13.5" r="0.75" fill="#d0d0d0"/></svg></span>
<span style="left:78px;top:0">H_EC</span>
</div>
<div class="row" style="left:0;top:712px;width:156px;background:#565656">
<span style="left:67px;top:2px"><svg width="18" height="16" viewBox="0 0 18 16"><g stroke="#b2b2b2" stroke-width="1.65" stroke-linecap="round" fill="none"><path d="M7.8 2.1 L14.7 14.4"/><path d="M10.4 2.3 L6.1 9.6"/><path d="M4.6 12.6 L3.4 14.5"/><path d="M1.8 10.15 H16.2"/></g></svg></span>
<span style="left:94px;top:0">_STA</span>
</div>
</div>
<div style="left:213px;top:116px;width:16px;height:734px;background:#3c3c3b"></div>
<div class="vl" style="left:213px;top:116px;height:734px;background:#4d4d4d"></div>
<div style="left:217px;top:690px;width:8px;height:109px;border-radius:4px;background:#797977;box-shadow:0 0 0 0.5px #303030"></div>
<div class="hl" style="left:57px;top:116px;width:172px;background:#565656"></div>
<div style="left:57px;top:848px;width:171px;height:22px;background:#363636"></div>
<div class="hl" style="left:57px;top:848px;width:172px;background:#666"></div>
<div style="left:58px;top:850px;width:169px;height:19px;border-radius:4px;background:#3b3b3b;border:1px solid #4d4d4d"></div>
<div style="left:81.5px;top:853px;font-size:11.5px;line-height:14px;color:#6e6e6e;-webkit-text-stroke:0.15px">Filter Tree</div>
<svg style="left:64px;top:854px" width="14" height="14" viewBox="0 0 14 14"><circle cx="5.2" cy="5.2" r="3.7" fill="none" stroke="#c0c0c0" stroke-width="1.1"/><path d="M7.9 7.9 L10.9 10.9" stroke="#c0c0c0" stroke-width="1.3" stroke-linecap="round"/></svg>
<div class="vl" style="left:228px;top:116px;height:754px;background:#707070"></div>
<div style="left:229px;top:116px;width:10px;height:754px;background:#363636"></div>
<div style="left:230px;top:490.5px;width:6px;height:6px;border-radius:50%;background:#8c8c8c"></div>
<div class="vl" style="left:238px;top:116px;height:754px;background:#6c6c6c"></div>
<div style="left:239px;top:148px;width:45px;height:722px;background:#353638;overflow:hidden">
<div class="ln" style="left:3px;top:-21px">42965</div>
<div class="ln" style="left:3px;top:-7px">42966</div>
<div class="ln" style="left:3px;top:7px">42967</div>
<div class="ln" style="left:3px;top:21px">42968</div>
<div class="ln" style="left:3px;top:35px">42969</div>
<div class="ln" style="left:3px;top:49px">42970</div>
<div class="ln" style="left:3px;top:63px">42971</div>
<div class="ln" style="left:3px;top:77px">42972</div>
<div class="ln" style="left:3px;top:91px">42973</div>
<div class="ln" style="left:3px;top:105px">42974</div>
<div class="ln" style="left:3px;top:119px">42975</div>
<div class="ln" style="left:3px;top:133px">42976</div>
<div class="ln" style="left:3px;top:147px">42977</div>
<div class="ln" style="left:3px;top:161px">42978</div>
<div class="ln" style="left:3px;top:175px">42979</div>
<div class="ln" style="left:3px;top:189px">42980</div>
<div class="ln" style="left:3px;top:203px">42981</div>
<div class="ln" style="left:3px;top:217px">42982</div>
<div class="ln" style="left:3px;top:231px">42983</div>
<div class="ln" style="left:3px;top:245px">42984</div>
<div class="ln" style="left:3px;top:259px">42985</div>
<div class="ln" style="left:3px;top:273px">42986</div>
<div class="ln" style="left:3px;top:287px">42987</div>
<div class="ln" style="left:3px;top:301px">42988</div>
<div class="ln" style="left:3px;top:315px">42989</div>
<div class="ln" style="left:3px;top:329px">42990</div>
<div class="ln" style="left:3px;top:343px">42991</div>
<div class="ln" style="left:3px;top:357px">42992</div>
<div class="ln" style="left:3px;top:371px">42993</div>
<div class="ln" style="left:3px;top:385px">42994</div>
<div class="ln" style="left:3px;top:399px">42995</div>
<div class="ln" style="left:3px;top:413px">42996</div>
<div class="ln" style="left:3px;top:427px">42997</div>
<div class="ln" style="left:3px;top:441px">42998</div>
<div class="ln" style="left:3px;top:455px">42999</div>
<div class="ln" style="left:3px;top:469px">43000</div>
<div class="ln" style="left:3px;top:483px">43001</div>
<div class="ln" style="left:3px;top:497px">43002</div>
<div class="ln" style="left:3px;top:511px">43003</div>
<div class="ln" style="left:3px;top:525px">43004</div>
<div class="ln" style="left:3px;top:539px">43005</div>
<div class="ln" style="left:3px;top:553px">43006</div>
<div class="ln" style="left:3px;top:567px">43007</div>
<div class="ln" style="left:3px;top:581px">43008</div>
<div class="ln" style="left:3px;top:595px">43009</div>
<div class="ln" style="left:3px;top:609px">43010</div>
<div class="ln" style="left:3px;top:623px">43011</div>
<div class="ln" style="left:3px;top:637px">43012</div>
<div class="ln" style="left:3px;top:651px">43013</div>
<div class="ln" style="left:3px;top:665px">43014</div>
<div class="ln" style="left:3px;top:679px">43015</div>
<div class="ln" style="left:3px;top:693px">43016</div>
<div class="ln" style="left:3px;top:707px">43017</div>
</div>
<div class="vl" style="left:283px;top:148px;height:722px;background:#4c4c4c"></div>
<div style="left:284px;top:148px;width:968px;height:722px;background:#2a2c37;overflow:hidden">
<div style="left:120px;top:331px;width:95px;height:14px;background:#3b5a88"></div>
<div class="cl" style="left:5px;top:-18px"></div>
<div class="cl" style="left:5px;top:-4px">    }</div>
<div class="cl" style="left:5px;top:10px"></div>
<div class="cl" style="left:5px;top:24px">    <i class="kw">Scope</i> (_SB)</div>
<div class="cl" style="left:5px;top:38px">    {</div>
<div class="cl" style="left:5px;top:52px">        <i class="kw">Device</i> (PWRB)</div>
<div class="cl" style="left:5px;top:66px">        {</div>
<div class="cl" style="left:5px;top:80px">            <i class="kw">Name</i> (_HID, <i class="kw">EisaId</i> (<i class="st">&quot;PNP0C0C&quot;</i>) <i class="cm">/* Power Button Device */</i>)  <i class="cm">// _HID: Hardware ID</i></div>
<div class="cl" style="left:5px;top:94px">            <i class="kw">Name</i> (PBST, <i class="nm">One</i>)</div>
<div class="cl" style="left:5px;top:108px">            <i class="kw">Method</i> (_STA, <i class="nm">0</i>, <i class="ns">NotSerialized</i>)  <i class="cm">// _STA: Status</i></div>
<div class="cl" style="left:5px;top:122px">            {</div>
<div class="cl" style="left:5px;top:136px">                <i class="kw">Return</i> (<i class="nm">0x0F</i>)</div>
<div class="cl" style="left:5px;top:150px">            }</div>
<div class="cl" style="left:5px;top:164px">        }</div>
<div class="cl" style="left:5px;top:178px">    }</div>
<div class="cl" style="left:5px;top:192px"></div>
<div class="cl" style="left:5px;top:206px">    <i class="kw">Scope</i> (_SB.PCI0.LPCB)</div>
<div class="cl" style="left:5px;top:220px">    {</div>
<div class="cl" style="left:5px;top:234px">        <i class="kw">Device</i> (H_EC)</div>
<div class="cl" style="left:5px;top:248px">        {</div>
<div class="cl" style="left:5px;top:262px">            <i class="kw">Name</i> (_HID, <i class="kw">EisaId</i> (<i class="st">&quot;PNP0C09&quot;</i>) <i class="cm">/* Embedded Controller Device */</i>)  <i class="cm">// _HID: Hardware ID</i></div>
<div class="cl" style="left:5px;top:276px">            <i class="kw">Name</i> (_UID, <i class="nm">One</i>)  <i class="cm">// _UID: Unique ID</i></div>
<div class="cl" style="left:5px;top:290px">            <i class="kw">Method</i> (_STA, <i class="nm">0</i>, <i class="ns">NotSerialized</i>)  <i class="cm">// _STA: Status</i></div>
<div class="cl" style="left:5px;top:304px">            {</div>
<div class="cl" style="left:5px;top:318px">                ^^^GFX0.CLID = <i class="nm">0x03</i></div>
<div class="cl" style="left:5px;top:332px">                Return (Zero)</div>
<div class="cl" style="left:5px;top:346px">            }</div>
<div class="cl" style="left:5px;top:360px"></div>
<div class="cl" style="left:5px;top:374px">            <i class="kw">Name</i> (ECAV, <i class="nm">Zero</i>)</div>
<div class="cl" style="left:5px;top:388px">            <i class="kw">Name</i> (B1ST, <i class="nm">0x32</i>)</div>
<div class="cl" style="left:5px;top:402px">            <i class="kw">Name</i> (B2ST, <i class="nm">0x36</i>)</div>
<div class="cl" style="left:5px;top:416px">            <i class="kw">Name</i> (CFAN, <i class="nm">0x03</i>)</div>
<div class="cl" style="left:5px;top:430px">            <i class="kw">Name</i> (CMDR, <i class="nm">0x3A</i>)</div>
<div class="cl" style="left:5px;top:444px">            <i class="kw">Name</i> (DOCK, <i class="nm">0x30</i>)</div>
<div class="cl" style="left:5px;top:458px">            <i class="kw">Name</i> (PLMX, <i class="nm">One</i>)</div>
<div class="cl" style="left:5px;top:472px">            <i class="kw">Name</i> (PECH, <i class="nm">0x83</i>)</div>
<div class="cl" style="left:5px;top:486px">            <i class="kw">Name</i> (PECL, <i class="nm">0x82</i>)</div>
<div class="cl" style="left:5px;top:500px">            <i class="kw">Name</i> (PENV, <i class="nm">0x44</i>)</div>
<div class="cl" style="left:5px;top:514px">            <i class="kw">Name</i> (PINV, <i class="nm">0x43</i>)</div>
<div class="cl" style="left:5px;top:528px">            <i class="kw">Name</i> (PPSH, <i class="nm">0x42</i>)</div>
<div class="cl" style="left:5px;top:542px">            <i class="kw">Name</i> (PPSL, <i class="nm">0x41</i>)</div>
<div class="cl" style="left:5px;top:556px">            <i class="kw">Name</i> (PSTP, <i class="nm">0x45</i>)</div>
<div class="cl" style="left:5px;top:570px">            <i class="kw">Name</i> (RPWR, <i class="nm">0x03</i>)</div>
<div class="cl" style="left:5px;top:584px">            <i class="kw">Name</i> (LSTE, <i class="nm">0x03</i>)</div>
<div class="cl" style="left:5px;top:598px">            <i class="kw">Name</i> (VPWR, <i class="nm">0x30</i>)</div>
<div class="cl" style="left:5px;top:612px">            <i class="kw">Name</i> (WTMS, <i class="nm">0xC4</i>)</div>
<div class="cl" style="left:5px;top:626px">            <i class="kw">Name</i> (AWT2, <i class="nm">0xC5</i>)</div>
<div class="cl" style="left:5px;top:640px">            <i class="kw">Name</i> (AWT1, <i class="nm">0xC6</i>)</div>
<div class="cl" style="left:5px;top:654px">            <i class="kw">Name</i> (AWT0, <i class="nm">0xC7</i>)</div>
<div class="cl" style="left:5px;top:668px">            <i class="kw">Name</i> (DLED, <i class="nm">0x78</i>)</div>
<div class="cl" style="left:5px;top:682px">            <i class="kw">Name</i> (SPT2, <i class="nm">0xC8</i>)</div>
<div class="cl" style="left:5px;top:696px">            <i class="kw">Name</i> (PB10, <i class="nm">0x78</i>)</div>
<div class="cl" style="left:5px;top:710px">            <i class="kw">Name</i> (IWCW, <i class="nm">0xA0</i>)</div>
</div>
<div style="left:1252px;top:148px;width:15px;height:722px;background:#3d3d3c"></div>
<div class="vl" style="left:1252px;top:148px;height:722px;background:#4a4a4a"></div>
<div style="left:1256px;top:836px;width:8px;height:18px;border-radius:4px;background:#868684;box-shadow:0 0 0 0.6px #2e2e2e"></div>
<div style="left:239px;top:116px;width:1028px;height:32px;background:#363739"></div>
<div class="hl" style="left:284px;top:116px;width:983px;background:#5e5e5e"></div>
<div class="hl" style="left:250px;top:116px;width:4px;background:#5a5a5a"></div>
<div class="hl" style="left:257px;top:116px;width:4px;background:#5a5a5a"></div>
<div class="hl" style="left:264px;top:116px;width:4px;background:#5a5a5a"></div>
<div class="hl" style="left:271px;top:116px;width:4px;background:#5a5a5a"></div>
<div class="hl" style="left:278px;top:116px;width:4px;background:#5a5a5a"></div>
<div class="hl" style="left:239px;top:148px;width:1028px;background:#545454"></div>
<div style="left:247px;top:123px;width:852px;height:19px;border-radius:5px;background:#404143;border:1px solid #535456"></div>
<div style="left:273px;top:126px;font-size:11px;line-height:14px;color:#e9e9e9;-webkit-text-stroke:0.25px">h_ec</div>
<svg style="left:252px;top:126px" width="20" height="14" viewBox="0 0 20 14">
<circle cx="6.3" cy="6.2" r="3.9" fill="none" stroke="#c8c8c8" stroke-width="1.1"/>
<path d="M9 9 L11.8 11.8" stroke="#c8c8c8" stroke-width="1.3" stroke-linecap="round"/>
<path d="M12.6 5.2 L14.6 7 L16.6 5.2" fill="none" stroke="#c8c8c8" stroke-width="1" stroke-linecap="round"/>
</svg>
<svg style="left:1083px;top:126px" width="13" height="13" viewBox="0 0 13 13">
<circle cx="6.3" cy="6.5" r="5.6" fill="#a3a3a3"/>
<path d="M4 4.2 L8.6 8.8 M8.6 4.2 L4 8.8" stroke="#3c3c3c" stroke-width="1.3" stroke-linecap="round"/>
</svg>
<div style="left:1107px;top:125px;width:35px;height:16px;border:1px solid #6c6c6c;border-radius:4px"></div>
<div class="vl" style="left:1124px;top:126px;height:14px;background:#6c6c6c"></div>
<svg style="left:1108px;top:126px" width="34" height="14" viewBox="0 0 34 14">
<path d="M8.5 3 L5 6.5 L8.5 10" fill="none" stroke="#d8d8d8" stroke-width="1.2" stroke-linecap="round"/>
<path d="M24 3 L27.5 6.5 L24 10" fill="none" stroke="#d8d8d8" stroke-width="1.2" stroke-linecap="round"/>
</svg>
<div style="left:1150px;top:125px;width:42px;height:16px;border:1px solid #6c6c6c;border-radius:4px"></div>
<div style="left:1157.5px;top:126px;font-size:11px;line-height:14px;color:#e6e6e6;-webkit-text-stroke:0.3px">Done</div>
<div style="left:1200px;top:127px;width:12px;height:12px;border-radius:3px;background:#5c5c5c"></div>
<div style="left:1217px;top:126px;font-size:11px;line-height:14px;color:#e6e6e6;-webkit-text-stroke:0.3px">Replace</div>
<div class="hl" style="left:56px;top:870px;width:1212px;background:#555"></div>
<div style="left:56px;top:871px;width:1212px;height:20px;background:#383837;border-radius:0 0 6px 6px"></div>
<div style="left:77px;top:874px;font-size:12.5px;letter-spacing:-0.70px;line-height:15px;color:#dcdcdc;-webkit-text-stroke:0.2px">DSDT</div>
<div style="left:120px;top:874px;font-size:12.5px;letter-spacing:-0.45px;line-height:15px;color:#dcdcdc;-webkit-text-stroke:0.2px">_SB.PCI0.LPCB</div>
<div style="left:218px;top:874px;font-size:12.5px;letter-spacing:-0.80px;line-height:15px;color:#dcdcdc;-webkit-text-stroke:0.2px">H_EC</div>
<div style="left:260px;top:874px;font-size:12.5px;letter-spacing:-1.20px;line-height:15px;color:#dcdcdc;-webkit-text-stroke:0.2px">_STA</div>
<svg style="left:112px;top:879px" width="5" height="5" viewBox="0 0 5 5"><path d="M0.3 0.5 L4 2.5 L0.3 4.5Z" fill="#858585"/></svg>
<svg style="left:210px;top:879px" width="5" height="5" viewBox="0 0 5 5"><path d="M0.3 0.5 L4 2.5 L0.3 4.5Z" fill="#858585"/></svg>
<svg style="left:253px;top:879px" width="5" height="5" viewBox="0 0 5 5"><path d="M0.3 0.5 L4 2.5 L0.3 4.5Z" fill="#858585"/></svg>
<div id="winb"></div>
</div></body></html>
